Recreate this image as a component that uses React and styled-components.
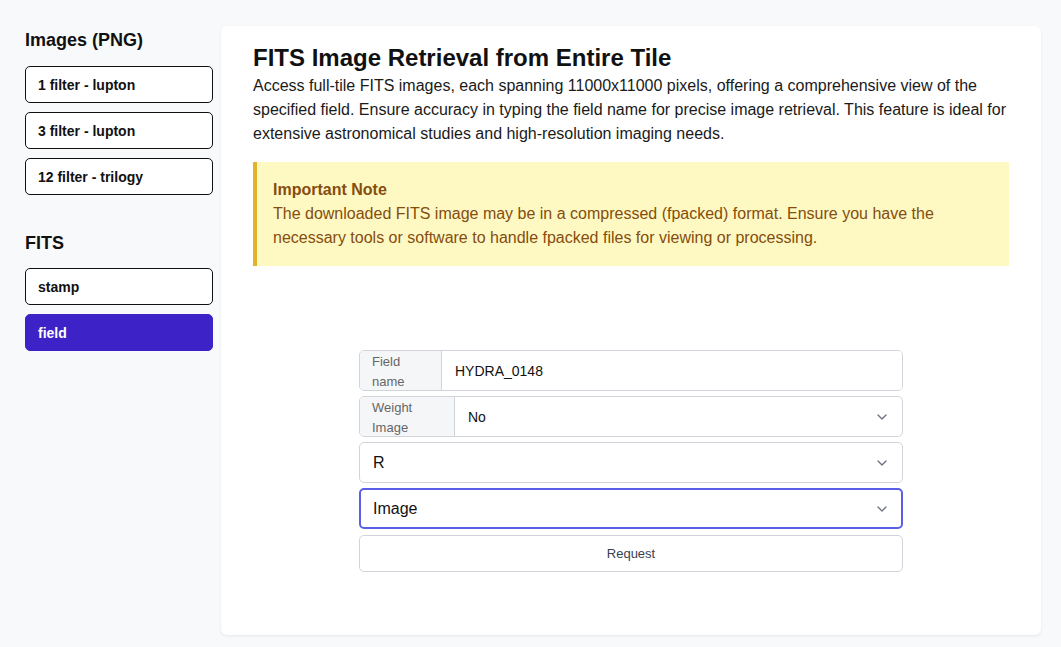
import styled, { createGlobalStyle } from 'styled-components';

const GlobalStyle = createGlobalStyle`
  body {
    margin: 0;
    background: #f8f9fb;
    font-family: 'Liberation Sans', Arial, sans-serif;
    color: #111;
  }
  * { box-sizing: border-box; }
`;

const Wrapper = styled.div`
  display: flex;
  gap: 8px;
  padding: 26px 20px 12px 25px;
  min-height: 647px;
`;

const Sidebar = styled.aside`
  width: 188px;
  flex-shrink: 0;
  display: flex;
  flex-direction: column;
`;

const SideTitle = styled.h2`
  margin: 4px 0 ${(p) => (p.tight ? 15 : 16)}px;
  font-size: 18px;
  font-weight: 700;
  line-height: 20px;
`;

const SideGroup = styled.div`
  display: flex;
  flex-direction: column;
  gap: 9px;
  margin-bottom: 34px;
`;

const SideButton = styled.button`
  height: 37px;
  width: 100%;
  text-align: left;
  padding: 0 12px;
  border-radius: 5px;
  border: 1px solid ${(p) => (p.active ? '#3d22c8' : '#111')};
  background: ${(p) => (p.active ? '#3d22c8' : '#fff')};
  color: ${(p) => (p.active ? '#fff' : '#111')};
  font-family: inherit;
  font-size: 14px;
  font-weight: 700;
  cursor: pointer;
`;

const Card = styled.main`
  flex: 1;
  height: 609px;
  background: #fff;
  border-radius: 6px;
  box-shadow: 0 1px 3px rgba(0, 0, 0, 0.08);
  padding: 18px 32px;
`;

const Title = styled.h1`
  margin: 0 0 2px;
  font-size: 24px;
  font-weight: 700;
  line-height: 28px;
`;

const Lead = styled.p`
  margin: 0 0 16px;
  font-size: 16px;
  line-height: 24px;
  color: #1a1a1a;
`;

const Note = styled.div`
  background: #fef9c3;
  border-left: 4px solid #e3b12b;
  padding: 16px 20px 16px 16px;
  color: #854d0e;
  font-size: 16px;
  line-height: 24px;
`;

const NoteTitle = styled.div`
  font-weight: 700;
`;

const Form = styled.form`
  width: 544px;
  margin: 84px auto 0;
  display: flex;
  flex-direction: column;
  gap: 5px;
`;

const Group = styled.div`
  display: flex;
  height: 41px;
  border: ${(p) => (p.focus ? '2px solid #5b5ee6' : '1px solid #d1d5db')};
  border-radius: 5px;
  overflow: hidden;
  background: #fff;
`;

const Addon = styled.label`
  width: ${(p) => p.w}px;
  flex-shrink: 0;
  background: #f5f6f8;
  border-right: 1px solid #d1d5db;
  padding: 1px 12px;
  font-size: 13px;
  line-height: 20px;
  color: #666;
`;

const TextInput = styled.input`
  flex: 1;
  border: none;
  outline: none;
  padding: 0 13px;
  font-family: inherit;
  font-size: 14px;
  color: #111;
`;

const SelectBox = styled.div`
  flex: 1;
  display: flex;
  align-items: center;
  justify-content: space-between;
  padding: 0 ${(p) => (p.focus ? 11 : 12)}px 0 ${(p) => (p.focus ? 12 : 13)}px;
  font-size: ${(p) => (p.large ? 16 : 14)}px;
  color: #111;
`;

const Button = styled.button`
  height: 37px;
  margin-top: 1px;
  border: 1px solid #d1d5db;
  border-radius: 5px;
  background: #fff;
  font-family: inherit;
  font-size: 13px;
  color: #374151;
  cursor: pointer;
`;

const Chevron = () => (
  <svg width="16" height="16" viewBox="0 0 24 24" fill="none" stroke="#6b7280" strokeWidth="2" strokeLinecap="round" strokeLinejoin="round">
    <path d="m6 9 6 6 6-6" />
  </svg>
);

const App = () => {
  return (
    <>
      <GlobalStyle />
      <Wrapper>
        <Sidebar>
          <SideTitle>Images (PNG)</SideTitle>
          <SideGroup>
            <SideButton>1 filter - lupton</SideButton>
            <SideButton>3 filter - lupton</SideButton>
            <SideButton>12 filter - trilogy</SideButton>
          </SideGroup>
          <SideTitle tight>FITS</SideTitle>
          <SideGroup>
            <SideButton>stamp</SideButton>
            <SideButton active>field</SideButton>
          </SideGroup>
        </Sidebar>

        <Card>
          <Title>FITS Image Retrieval from Entire Tile</Title>
          <Lead>
            Access full-tile FITS images, each spanning 11000x11000 pixels, offering a comprehensive view of the
            specified field. Ensure accuracy in typing the field name for precise image retrieval. This feature is ideal for
            extensive astronomical studies and high-resolution imaging needs.
          </Lead>
          <Note>
            <NoteTitle>Important Note</NoteTitle>
            The downloaded FITS image may be in a compressed (fpacked) format. Ensure you have the
            necessary tools or software to handle fpacked files for viewing or processing.
          </Note>

          <Form onSubmit={(e) => e.preventDefault()}>
            <Group>
              <Addon w={82} htmlFor="field">Field name</Addon>
              <TextInput id="field" defaultValue="HYDRA_0148" />
            </Group>
            <Group>
              <Addon w={95}>Weight Image</Addon>
              <SelectBox>
                No
                <Chevron />
              </SelectBox>
            </Group>
            <Group>
              <SelectBox large>
                R
                <Chevron />
              </SelectBox>
            </Group>
            <Group focus>
              <SelectBox large focus>
                Image
                <Chevron />
              </SelectBox>
            </Group>
            <Button type="submit">Request</Button>
          </Form>
        </Card>
      </Wrapper>
    </>
  );
};

export default App;
